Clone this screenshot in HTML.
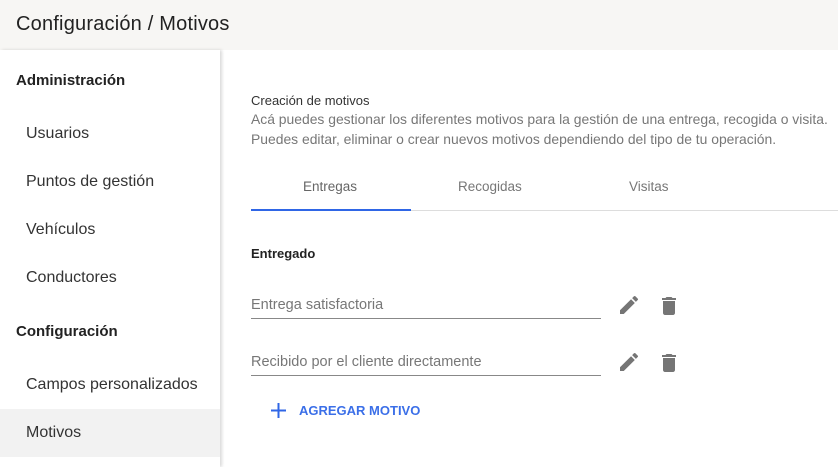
<!DOCTYPE html>
<html><head><meta charset="utf-8"><style>
*{margin:0;padding:0;box-sizing:border-box}
body{width:838px;height:467px;overflow:hidden;background:#fff;font-family:"Liberation Sans",sans-serif;position:relative}
.a{position:absolute;white-space:nowrap;line-height:1}
</style></head><body>
<div class="a" style="left:0;top:0;width:838px;height:50px;background:#f7f6f4"></div>
<div class="a" style="left:16px;top:14px;font-size:20px;color:#222;letter-spacing:0.2px">Configuración / Motivos</div>
<div class="a" style="left:0;top:50px;width:220px;height:417px;background:#fff;box-shadow:2px 0 3px rgba(0,0,0,0.15)"></div>
<div class="a" style="left:0;top:409px;width:220px;height:48px;background:#f2f2f2"></div>
<div class="a" style="left:16px;top:73px;font-size:15px;font-weight:bold;color:#222">Administración</div>
<div class="a" style="left:26px;top:126px;font-size:16px;color:#333">Usuarios</div>
<div class="a" style="left:26px;top:174px;font-size:16px;color:#333">Puntos de gestión</div>
<div class="a" style="left:26px;top:222px;font-size:16px;color:#333">Vehículos</div>
<div class="a" style="left:26px;top:270px;font-size:16px;color:#333">Conductores</div>
<div class="a" style="left:16px;top:324px;font-size:15px;font-weight:bold;color:#222">Configuración</div>
<div class="a" style="left:26px;top:377px;font-size:16px;color:#333">Campos personalizados</div>
<div class="a" style="left:26px;top:425px;font-size:16px;color:#333">Motivos</div>

<div class="a" style="left:251px;top:94px;font-size:13px;color:#333">Creación de motivos</div>
<div class="a" style="left:251px;top:113px;font-size:13.9px;color:#777">Acá puedes gestionar los diferentes motivos para la gestión de una entrega, recogida o visita.</div>
<div class="a" style="left:251px;top:133px;font-size:13.9px;color:#777">Puedes editar, eliminar o crear nuevos motivos dependiendo del tipo de tu operación.</div>
<div class="a" style="left:303px;top:180px;font-size:13.5px;color:#666">Entregas</div>
<div class="a" style="left:458px;top:180px;font-size:13.5px;color:#777">Recogidas</div>
<div class="a" style="left:629px;top:180px;font-size:13.5px;color:#777">Visitas</div>
<div class="a" style="left:251px;top:210px;width:587px;height:1px;background:#ddd"></div>
<div class="a" style="left:251px;top:209px;width:160px;height:2px;background:#2f66e6"></div>
<div class="a" style="left:251px;top:247px;font-size:13px;font-weight:bold;color:#222">Entregado</div>

<div class="a" style="left:251px;top:298px;font-size:14.5px;color:#777">Entrega satisfactoria</div>
<div class="a" style="left:251px;top:318px;width:350px;height:1px;background:#888"></div>
<div class="a" style="left:251px;top:355px;font-size:14.5px;color:#777">Recibido por el cliente directamente</div>
<div class="a" style="left:251px;top:375px;width:350px;height:1px;background:#888"></div>

<svg class="a" style="left:617px;top:293px" width="24" height="24" viewBox="0 0 24 24"><path fill="#757575" d="M3 17.25V21h3.75L17.81 9.94l-3.75-3.75L3 17.25zM20.71 7.04a1 1 0 000-1.41l-2.34-2.34a1 1 0 00-1.41 0l-1.83 1.83 3.75 3.75 1.83-1.83z"/></svg>
<svg class="a" style="left:657px;top:294px" width="24" height="24" viewBox="0 0 24 24"><path fill="#757575" d="M6 19c0 1.1.9 2 2 2h8c1.1 0 2-.9 2-2V7H6v12zM19 4h-3.5l-1-1h-5l-1 1H5v2h14V4z"/></svg>
<svg class="a" style="left:617px;top:350px" width="24" height="24" viewBox="0 0 24 24"><path fill="#757575" d="M3 17.25V21h3.75L17.81 9.94l-3.75-3.75L3 17.25zM20.71 7.04a1 1 0 000-1.41l-2.34-2.34a1 1 0 00-1.41 0l-1.83 1.83 3.75 3.75 1.83-1.83z"/></svg>
<svg class="a" style="left:657px;top:351px" width="24" height="24" viewBox="0 0 24 24"><path fill="#757575" d="M6 19c0 1.1.9 2 2 2h8c1.1 0 2-.9 2-2V7H6v12zM19 4h-3.5l-1-1h-5l-1 1H5v2h14V4z"/></svg>

<svg class="a" style="left:271px;top:403px" width="15" height="15" viewBox="0 0 15 15"><path d="M7.5 0v15M0 7.5h15" stroke="#2f66e6" stroke-width="2"/></svg>
<div class="a" style="left:299px;top:404px;font-size:13px;font-weight:bold;color:#3b6fe8">AGREGAR MOTIVO</div>
</body></html>
